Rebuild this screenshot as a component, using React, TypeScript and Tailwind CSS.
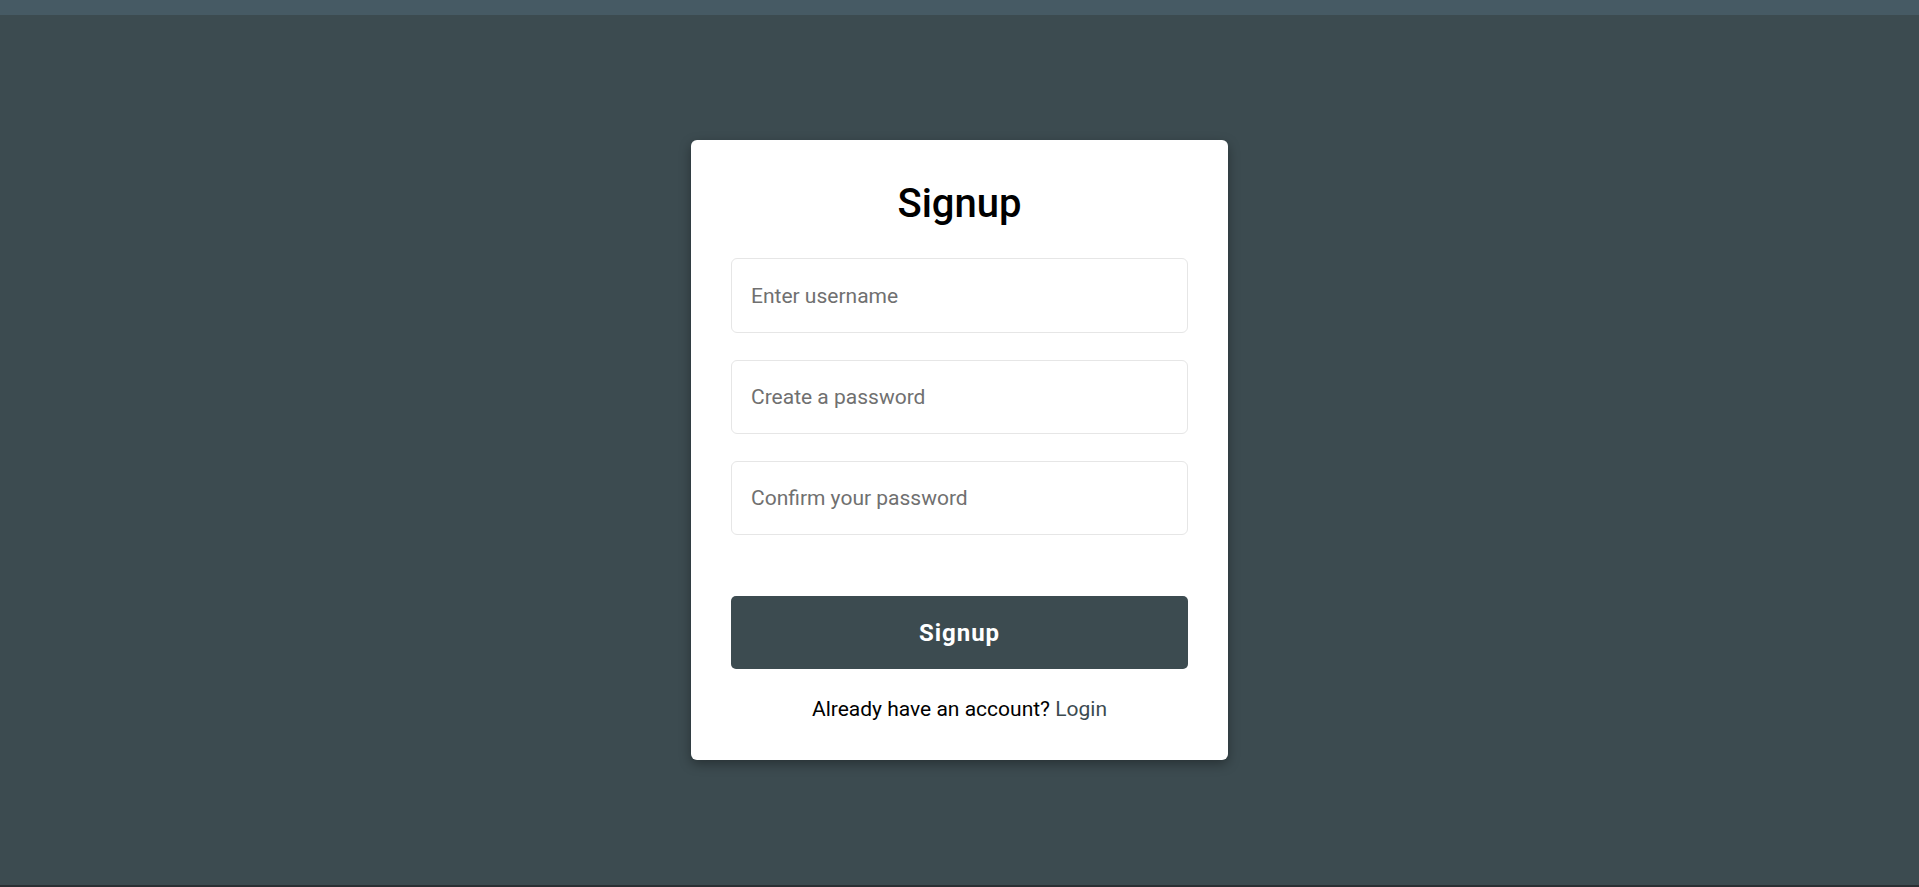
import { FormEvent } from 'react';

export default function App() {
  const handleSubmit = (event: FormEvent<HTMLFormElement>) => {
    event.preventDefault();
  };

  return (
    <div className="flex h-screen flex-col bg-[#3c4b50] font-['Roboto',sans-serif]">
      <div className="h-[15px] shrink-0 bg-[#465a64]" />

      <main className="flex flex-1 items-center justify-center">
        <div className="w-[537px] rounded-[6px] bg-white p-[40px] shadow-[0_4px_12px_rgba(0,0,0,0.35)]">
          <h2 className="mb-[31px] text-center text-[40px] leading-[47px] font-medium text-black">
            Signup
          </h2>

          <form className="flex flex-col" onSubmit={handleSubmit}>
            <input
              type="text"
              name="username"
              autoComplete="off"
              placeholder="Enter username"
              className="h-[75px] rounded-[6px] border border-[#e6e6e6] px-[19px] text-[21px] text-black outline-none placeholder:text-[#707070]"
            />
            <input
              type="password"
              name="password"
              autoComplete="off"
              placeholder="Create a password"
              className="mt-[27px] h-[74px] rounded-[6px] border border-[#e6e6e6] px-[19px] text-[21px] text-black outline-none placeholder:text-[#707070]"
            />
            <input
              type="password"
              name="confirm"
              autoComplete="off"
              placeholder="Confirm your password"
              className="mt-[27px] h-[74px] rounded-[6px] border border-[#e6e6e6] px-[19px] text-[21px] text-black outline-none placeholder:text-[#707070]"
            />

            <button
              type="submit"
              className="mt-[61px] h-[73px] rounded-[5px] bg-[#3c4b50] text-[24px] font-bold tracking-[1px] text-white"
            >
              Signup
            </button>
          </form>

          <p className="mt-[29px] text-center text-[21px] leading-[22px] text-black">
            Already have an account?{' '}
            <a href="#" className="text-[#3c4b50]">
              Login
            </a>
          </p>
        </div>
      </main>

      <div className="h-[2px] shrink-0 bg-[#2a2f33]" />
    </div>
  );
}
